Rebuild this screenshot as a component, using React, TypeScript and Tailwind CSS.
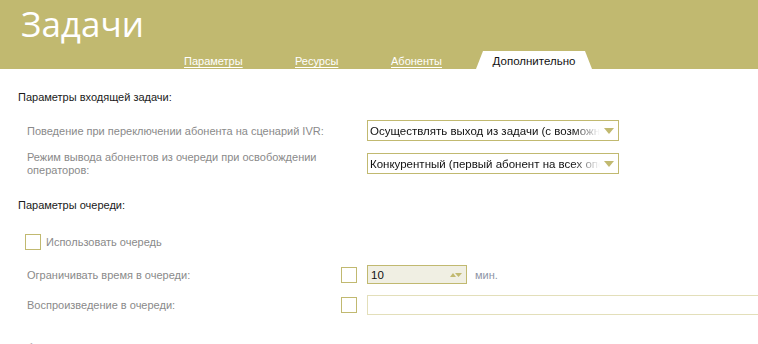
import React from 'react';

const Caret: React.FC = () => (
  <svg width="10" height="6" viewBox="0 0 10 6" className="shrink-0">
    <path d="M0 0 H10 L5 6 Z" fill="#c1b970" />
  </svg>
);

const Checkbox: React.FC = () => (
  <span className="block h-[16px] w-[16px] shrink-0 border border-[#c1b970] bg-white" />
);

const Select: React.FC<{ value: string; className?: string }> = ({ value, className = '' }) => (
  <div className={`flex h-[21px] w-[252px] shrink-0 items-center gap-1 border border-[#c1b970] bg-white pl-[2px] pr-[4px] ${className}`}>
    <span className="flex-1 overflow-hidden whitespace-nowrap text-[11.5px] text-[#111] [mask-image:linear-gradient(to_right,black_88%,transparent)]">{value}</span>
    <Caret />
  </div>
);

const tabs = ['Параметры', 'Ресурсы', 'Абоненты'];

export default function App() {
  return (
    <div className="h-[344px] w-[758px] overflow-hidden bg-white font-['Liberation_Sans',Arial,sans-serif]">
      {/* Header */}
      <header className="relative h-[69px] bg-[#c1b970]">
        <h1 className="pl-[21px] pt-[1px] font-['Open_Sans',sans-serif] text-[35px] leading-[46px] text-white">
          Задачи
        </h1>
        <nav className="absolute bottom-0 left-[184px] flex items-end">
          {tabs.map((t, i) => (
            <a
              key={t}
              className={`mb-[1px] text-[11px] leading-[14px] text-white underline underline-offset-2 ${i === 0 ? 'w-[111px]' : i === 1 ? 'w-[96px]' : 'w-[85px]'}`}
            >
              {t}
            </a>
          ))}
          <span className="flex h-[18px] w-[116px] items-end justify-center bg-white pb-[1px] text-[11.5px] leading-[14px] text-[#111] [clip-path:polygon(7px_0,109px_0,116px_100%,0_100%)]">
            Дополнительно
          </span>
        </nav>
      </header>

      {/* Body */}
      <div className="pl-[18px] pt-[21px] text-[11px] leading-[14px]">
        <h2 className="text-[#1a1a1a]">Параметры входящей задачи:</h2>

        <div className="mt-[16px] flex flex-col gap-[10px] pl-[9px]">
          <div className="flex items-center">
            <span className="w-[340px] text-[#8a8a8a]">Поведение при переключении абонента на сценарий IVR:</span>
            <Select value="Осуществлять выход из задачи (с возможностью возврата)" />
          </div>
          <div className="flex items-start">
            <span className="w-[340px] pr-[20px] leading-[13px] text-[#8a8a8a]">
              Режим вывода абонентов из очереди при освобождении операторов:
            </span>
            <Select className="mt-[2px]" value="Конкурентный (первый абонент на всех операторов)" />
          </div>
        </div>

        <h2 className="mt-[21px] text-[#1a1a1a]">Параметры очереди:</h2>

        <div className="mt-[22px] flex items-center gap-[5px] pl-[7px]">
          <Checkbox />
          <span className="text-[#8a8a8a]">Использовать очередь</span>
        </div>

        <div className="mt-[15px] flex flex-col gap-[11px] pl-[9px]">
          <div className="flex h-[19px] items-center">
            <span className="w-[314px] text-[#8a8a8a]">Ограничивать время в очереди:</span>
            <Checkbox />
            <div className="ml-[10px] flex h-[19px] w-[100px] items-center border border-[#c1b970] bg-[#f0efe3] pl-[3px] pr-[4px]">
              <span className="flex-1 text-[11.5px] text-[#111]">10</span>
              <svg width="12" height="5" viewBox="0 0 12 5">
                <path d="M0 5 L3 1 L6 5 Z" fill="#c1b970" />
                <path d="M5 1 H12 L8.5 5 Z" fill="#c1b970" />
              </svg>
            </div>
            <span className="ml-[8px] text-[#8d94a6]">мин.</span>
          </div>
          <div className="flex h-[20px] items-center">
            <span className="w-[314px] text-[#8a8a8a]">Воспроизведение в очереди:</span>
            <Checkbox />
            <div className="ml-[10px] h-[20px] flex-1 border border-[#e3dfba] border-r-0 bg-white" />
          </div>
        </div>

        <h2 className="mt-[26px] text-[#1a1a1a]">Общие параметры:</h2>
      </div>
    </div>
  );
}
